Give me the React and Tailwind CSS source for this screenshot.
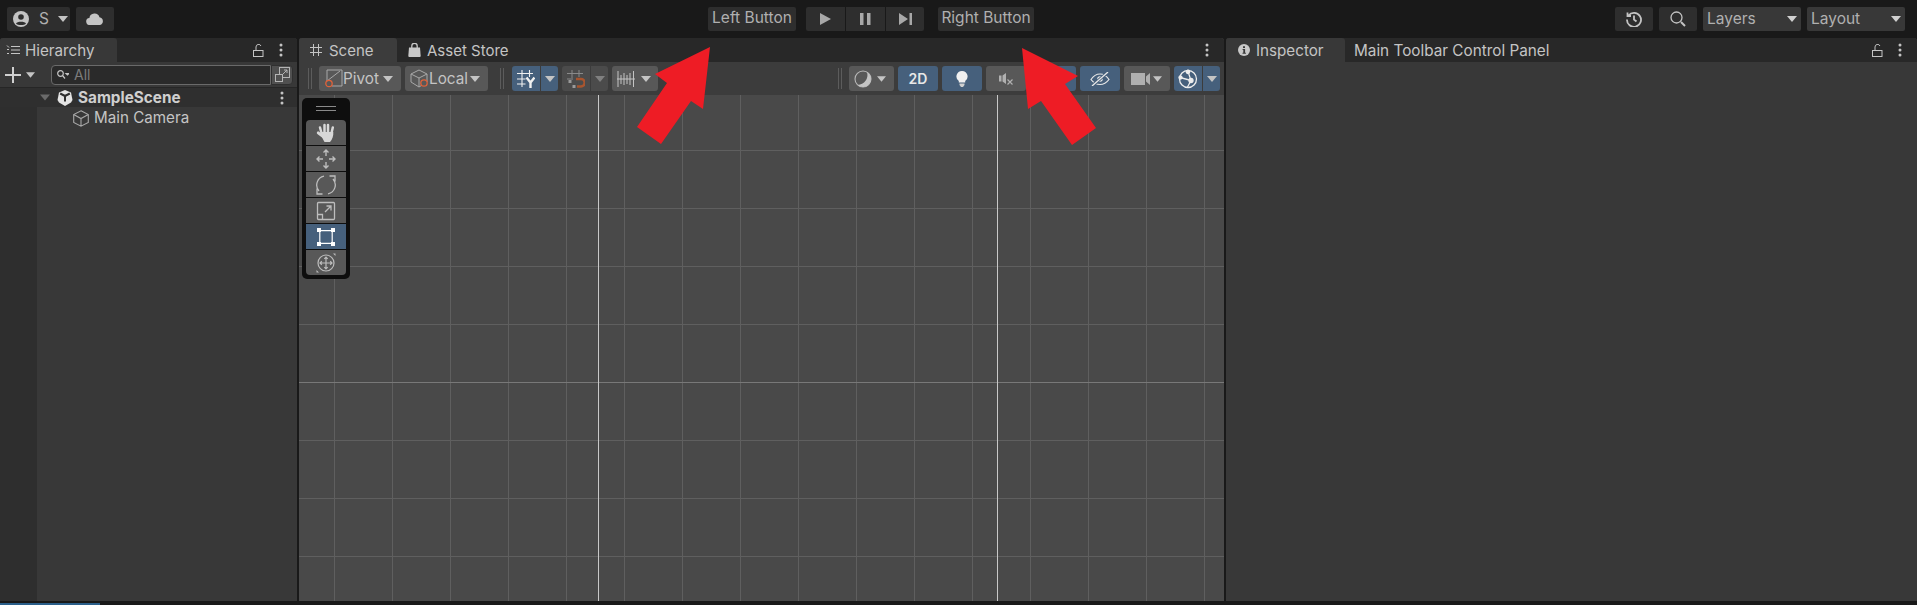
const verticals = [334, 392, 450, 508, 566, 624, 682, 740, 798, 856, 914, 972, 1030, 1088, 1146, 1204];
const horizontals = [150, 208, 266, 324, 440, 498, 556];

function Caret({ className = "w-[10px] h-[6px]", color = "#c4c4c4" }) {
  return (
    <svg viewBox="0 0 10 6" className={className}>
      <path d="M0 0h10L5 6z" fill={color} />
    </svg>
  );
}

function Kebab({ className = "" }) {
  return (
    <svg viewBox="0 0 4 14" className={`w-[4px] h-[14px] ${className}`}>
      <circle cx="2" cy="2" r="1.5" fill="#c4c4c4" />
      <circle cx="2" cy="7" r="1.5" fill="#c4c4c4" />
      <circle cx="2" cy="12" r="1.5" fill="#c4c4c4" />
    </svg>
  );
}

function Lock() {
  return (
    <svg viewBox="0 0 11 13" className="w-[11px] h-[13px]" fill="none" stroke="#c4c4c4" strokeWidth="1">
      <rect x="0.5" y="6.5" width="9.5" height="6" />
      <path d="M3 6.5V3a2.6 2.6 0 0 1 5-1" />
    </svg>
  );
}

function Handle() {
  return (
    <div className="flex gap-[2px] h-[21px]">
      <div className="w-[1px] bg-[#5c5c5c]" />
      <div className="w-[1px] bg-[#5c5c5c]" />
    </div>
  );
}

function TopButton({ className = "", children }) {
  return (
    <div className={`h-[24px] rounded-[2px] bg-[#2e2e2e] flex items-center text-[#b0b0b0] text-[15.5px] ${className}`}>
      {children}
    </div>
  );
}

function ToolButton({ className = "", active, children }) {
  return (
    <div
      className={`h-[25px] rounded-[3px] flex items-center justify-center ${active ? "bg-[#46607c]" : "bg-[#585858]"} ${className}`}
    >
      {children}
    </div>
  );
}

function SplitButton({ active, dim, left, className = "" }) {
  return (
    <div className={`h-[25px] w-[46px] flex rounded-[3px] overflow-hidden ${className}`}>
      <div className={`w-[28px] flex items-center justify-center ${active ? "bg-[#46607c]" : dim ? "bg-[#4b4b4b]" : "bg-[#585858]"}`}>
        {left}
      </div>
      <div className={`flex-1 ml-[1px] flex items-center justify-center ${active ? "bg-[#46607c]" : dim ? "bg-[#4b4b4b]" : "bg-[#585858]"}`}>
        <Caret color={dim ? "#808080" : "#c4c4c4"} />
      </div>
    </div>
  );
}

function PaletteButton({ active, className = "", children }) {
  return (
    <div className={`h-[25px] flex items-center justify-center ${active ? "bg-[#46607c]" : "bg-[#585858]"} ${className}`}>
      {children}
    </div>
  );
}

function SceneGrid() {
  return (
    <svg className="absolute top-0 left-0 w-[925px] h-[506px]" viewBox="299 95 925 506">
      {verticals.map((x) => (
        <rect key={x} x={x} y="95" width="1" height="506" fill="#5f5f5f" />
      ))}
      {horizontals.map((y) => (
        <rect key={y} x="299" y={y} width="925" height="1" fill="#5f5f5f" />
      ))}
      <rect x="299" y="382" width="925" height="1" fill="#787878" />
      <rect x="598" y="95" width="1" height="506" fill="#c8c8c8" />
      <rect x="997" y="95" width="1" height="506" fill="#c8c8c8" />
    </svg>
  );
}

function ToolPalette() {
  return (
    <div className="absolute left-[3px] top-[3px] w-[48px] h-[181px] bg-[#0e0e0e] rounded-[5px] px-[4px]">
      <div className="h-[22px] flex flex-col items-center justify-center gap-[3px] pb-[1px]">
        <div className="w-[20px] h-[1px] bg-[#8a8a8a]" />
        <div className="w-[20px] h-[1px] bg-[#8a8a8a]" />
      </div>
      <div className="flex flex-col gap-[1px]">
        <PaletteButton className="rounded-t-[4px]">
          <svg viewBox="0 0 20 20" className="w-[20px] h-[20px]" fill="none" stroke="#d8d8d8" strokeLinecap="round">
            <path d="M5.500 10 4 4.500M8.500 9V2M12 9V2M15.500 10 16.800 4.500" strokeWidth="2.500" />
            <path d="M7.500 14 2.200 9.800" strokeWidth="2.800" />
            <path d="M4.800 9h12.500c.3 3.500-1 7.500-3.300 10H8.500C7 16.500 5.500 14 4.800 9z" fill="#d8d8d8" stroke="none" />
          </svg>
        </PaletteButton>
        <PaletteButton>
          <svg viewBox="0 0 20 20" className="w-[20px] h-[20px]" fill="none" stroke="#bdbdbd" strokeWidth="1.400">
            <path d="M10 1v6M10 13v6M1 10h6M13 10h6M7.500 3.500 10 1l2.500 2.500M7.500 16.500 10 19l2.500-2.500M3.500 7.500 1 10l2.500 2.500M16.500 7.500 19 10l-2.500 2.500" />
          </svg>
        </PaletteButton>
        <PaletteButton>
          <svg viewBox="0 0 20 20" className="w-[20px] h-[20px]" fill="none" stroke="#bdbdbd" strokeWidth="1.300">
            <path d="M8 1.200A9 9 0 0 0 3 16M1 13.500V19h5.500" />
            <path d="M12 18.800A9 9 0 0 0 17 4M13.500 1H19v5.500" />
          </svg>
        </PaletteButton>
        <PaletteButton>
          <svg viewBox="0 0 20 20" className="w-[20px] h-[20px]" fill="none" stroke="#bdbdbd" strokeWidth="1.300">
            <rect x="1.500" y="1.500" width="17" height="17" rx="1" />
            <path d="M1.500 13.500h5v5M9 11l6-6M10.500 5H15v4.500" />
          </svg>
        </PaletteButton>
        <PaletteButton active>
          <svg viewBox="0 0 20 20" className="w-[20px] h-[20px]" fill="#ffffff">
            <path d="M5 3h10v1.200H5zM5 15.800h10V17H5zM3.200 5h1.200v10H3.200zM15.600 5h1.200v10h-1.200z" />
            <rect x="1" y="1" width="4" height="4" />
            <rect x="15" y="1" width="4" height="4" />
            <rect x="1" y="15" width="4" height="4" />
            <rect x="15" y="15" width="4" height="4" />
          </svg>
        </PaletteButton>
        <PaletteButton className="rounded-b-[4px]">
          <svg viewBox="0 0 20 20" className="w-[20px] h-[20px]" fill="none" stroke="#bdbdbd" strokeWidth="1.200">
            <circle cx="10" cy="10" r="8" />
            <path d="M10 4v12M4 10h12M8.300 5.800 10 4l1.700 1.800M8.300 14.200 10 16l1.700-1.800M5.800 8.300 4 10l1.800 1.700M14.200 8.300 16 10l-1.800 1.700" />
            <path d="M17 .5h2.500V3zM.5 19.500V17L3 19.500z" fill="#bdbdbd" stroke="none" />
          </svg>
        </PaletteButton>
      </div>
    </div>
  );
}

function Arrows() {
  return (
    <svg className="absolute top-0 left-0 w-[1917px] h-[605px] pointer-events-none" viewBox="0 0 1917 605">
      <polygon points="710,47 655,74 667,83 637,127 661,144 691,101 703,109" fill="#ee1c25" />
      <polygon points="1022,48 1078,76 1065,84 1096,128 1072,145 1041,101 1028,109" fill="#ee1c25" />
    </svg>
  );
}

function TopBar() {
  return (
    <div className="h-[38px] shrink-0 bg-[#191919] flex items-start pt-[7px] pl-[7px] pr-[12px]">
      <TopButton className="w-[63px] pl-[6px]">
        <svg viewBox="0 0 16 16" className="w-[16px] h-[16px]">
          <circle cx="8" cy="8" r="8" fill="#c4c4c4" />
          <circle cx="8" cy="6" r="2.800" fill="#2e2e2e" />
          <path d="M3 12.500c1-2.500 9-2.500 10 0-1.500 2-8.500 2-10 0z" fill="#2e2e2e" />
        </svg>
        <span className="ml-[10px]">S</span>
        <Caret className="w-[10px] h-[6px] ml-[9px]" />
      </TopButton>
      <TopButton className="w-[38px] ml-[6px] justify-center">
        <svg viewBox="0 0 18 12" className="w-[18px] h-[12px]">
          <path d="M4 12a3.500 3.500 0 0 1-.6-7A5.200 5.200 0 0 1 13.500 4.200 4 4 0 0 1 14 12z" fill="#c4c4c4" />
        </svg>
      </TopButton>

      <TopButton className="w-[88px] ml-[594px] justify-center pb-[3px]">Left Button</TopButton>
      <div className="flex ml-[10px] h-[24px] gap-[1px]">
        <div className="w-[39px] bg-[#2e2e2e] rounded-l-[2px] flex items-center justify-center">
          <svg viewBox="0 0 11 12" className="w-[11px] h-[12px]">
            <path d="M0 0l11 6-11 6z" fill="#a8a8a8" />
          </svg>
        </div>
        <div className="w-[39px] bg-[#2e2e2e] flex items-center justify-center">
          <svg viewBox="0 0 11 12" className="w-[11px] h-[12px]">
            <path d="M0 0h3.500v12H0zM7 0h3.500v12H7z" fill="#a8a8a8" />
          </svg>
        </div>
        <div className="w-[38px] bg-[#2e2e2e] rounded-r-[2px] flex items-center justify-center">
          <svg viewBox="0 0 13 12" className="w-[13px] h-[12px]">
            <path d="M0 0l9 6-9 6zM10.500 0H13v12h-2.500z" fill="#a8a8a8" />
          </svg>
        </div>
      </div>
      <TopButton className="w-[96px] ml-[14px] justify-center pb-[3px]">Right Button</TopButton>

      <TopButton className="w-[38px] ml-auto justify-center">
        <svg viewBox="0 0 16 16" className="w-[16px] h-[16px]" fill="none" stroke="#c4c4c4" strokeWidth="1.800">
          <path d="M2.500 4.500a7 7 0 1 1-1.500 4M1.500 1.500v3.500H5M8 4.500V8.500l2.500 2" />
        </svg>
      </TopButton>
      <TopButton className="w-[38px] ml-[6px] justify-center">
        <svg viewBox="0 0 16 16" className="w-[16px] h-[16px]" fill="none" stroke="#c4c4c4" strokeWidth="1.300">
          <circle cx="6.500" cy="6.500" r="5.500" />
          <path d="M11 11l4 4" strokeWidth="2" />
        </svg>
      </TopButton>
      <TopButton className="w-[98px] ml-[6px] pl-[4px] pr-[3px] justify-between bg-[#383838]">
        Layers
        <Caret className="w-[10px] h-[6px] mr-[1px]" color="#d0d0d0" />
      </TopButton>
      <TopButton className="w-[98px] ml-[6px] pl-[4px] pr-[3px] justify-between bg-[#383838]">
        Layout
        <Caret className="w-[10px] h-[6px] mr-[1px]" color="#d0d0d0" />
      </TopButton>
    </div>
  );
}

function Hierarchy() {
  return (
    <div className="w-[297px] shrink-0 flex flex-col rounded-t-[3px] overflow-hidden bg-[#383838]">
      <div className="h-[24px] shrink-0 bg-[#282828] flex items-center">
        <div className="w-[117px] h-full bg-[#383838] rounded-tr-[3px] flex items-center pl-[6px]">
          <svg viewBox="0 0 14 10" className="w-[14px] h-[10px]" fill="none" stroke="#c4c4c4" strokeWidth="1">
            <path d="M5 1.500h9M5 5h9M5 8.500h9M1 .5 3 2.500M1 4.500h2M1 8.500h2" />
          </svg>
          <span className="ml-[5px] pt-[2px] text-[15.2px] text-[#c4c4c4]">Hierarchy</span>
        </div>
        <div className="ml-auto flex items-center mr-[14px] gap-[15px]">
          <Lock />
          <Kebab />
        </div>
      </div>
      <div className="h-[25px] shrink-0 flex items-center pl-[5px]">
        <svg viewBox="0 0 16 16" className="w-[16px] h-[16px]">
          <path d="M7 0h2v7h7v2H9v7H7V9H0V7h7z" fill="#d0d0d0" />
        </svg>
        <Caret className="w-[9px] h-[6px] ml-[5px]" />
        <div className="ml-[16px] w-[220px] h-[20px] rounded-l-[4px] border border-[#6a6a6a] bg-[#2a2a2a] flex items-center pl-[5px]">
          <svg viewBox="0 0 12 10" className="w-[12px] h-[10px]" fill="none" stroke="#c4c4c4" strokeWidth="1.200">
            <circle cx="3.500" cy="3.500" r="2.800" />
            <path d="M5.500 5.500 8 8.500M9 3.500h3l-1.500 1.500z" />
          </svg>
          <span className="ml-[5px] text-[14px] text-[#7c7c7c]">All</span>
        </div>
        <div className="w-[22px] h-[20px] rounded-r-[4px] bg-[#505050] border border-[#303030] flex items-center justify-center">
          <svg viewBox="0 0 15 15" className="w-[15px] h-[15px]" fill="none" stroke="#b4b4b4" strokeWidth="1">
            <rect x="4.500" y=".5" width="10" height="10" />
            <rect x=".5" y="7.500" width="7" height="7" fill="#505050" />
            <path d="M7 8l5-5M9 3h3v3" />
          </svg>
        </div>
      </div>
      <div className="h-[20px] shrink-0 bg-[#2f2f2f] border-t border-[#262626] flex items-center pl-[40px] pr-[13px]">
        <Caret className="w-[10px] h-[9px]" color="#6a6a6a" />
        <svg viewBox="0 0 16 16" className="w-[16px] h-[16px] ml-[7px]">
          <path d="M8 0 14 2.500 15.500 10 14 12.500 8 16 2 12.500 .5 10 2 2.500z" fill="#e4e4e4" />
          <path d="M8 6 3.200 3.500M8 6l4.800-2.500M8 6v5.500" stroke="#2f2f2f" strokeWidth="2" />
        </svg>
        <span className="ml-[5px] pt-[2px] text-[15.3px] font-bold text-[#cfcfcf]">SampleScene</span>
        <Kebab className="ml-auto" />
      </div>
      <div className="flex-1 flex">
        <div className="w-[37px] bg-[#2e2e2e]" />
        <div className="flex-1">
          <div className="h-[22px] flex items-center pl-[36px]">
            <svg viewBox="0 0 16 17" className="w-[16px] h-[17px]" fill="none" stroke="#a8a8a8" strokeWidth="1.100">
              <path d="M8 .8 15.300 4.500V12.500L8 16.200.7 12.500V4.500zM.7 4.500 8 8.500l7.300-4M8 8.500v7.700" />
            </svg>
            <span className="ml-[5px] text-[15.2px] text-[#c4c4c4]">Main Camera</span>
          </div>
        </div>
      </div>
    </div>
  );
}

function SceneToolbar() {
  return (
    <div className="h-[33px] shrink-0 bg-[#3c3c3c] flex items-center">
      <Handle />
      <ToolButton className="w-[82px] ml-[7px] pl-[5px] pr-[8px] !justify-start">
        <svg viewBox="0 0 19 19" className="w-[19px] h-[19px] shrink-0" fill="none">
          <path d="M3 12V1h15v16H8M3 12 16 2" stroke="#a8a8a8" strokeWidth="1" />
          <circle cx="5" cy="14.500" r="3.200" stroke="#e0623a" strokeWidth="1.300" />
        </svg>
        <span className="pt-[2px] text-[15.3px] text-[#c4c4c4]">Pivot</span>
        <Caret className="w-[10px] h-[6px] ml-auto" />
      </ToolButton>
      <ToolButton className="w-[83px] ml-[4px] pl-[5px] pr-[8px] !justify-start">
        <svg viewBox="0 0 19 19" className="w-[19px] h-[19px] shrink-0" fill="none">
          <path d="M9 1 17 5v8l-8 5-8-5V5zM1 5l8 4 8-4M9 9v9" stroke="#a8a8a8" strokeWidth="1" />
          <circle cx="14" cy="14" r="3.200" fill="#585858" stroke="#e0623a" strokeWidth="1.300" />
        </svg>
        <span className="pt-[2px] text-[15.3px] text-[#c4c4c4]">Local</span>
        <Caret className="w-[10px] h-[6px] ml-auto" />
      </ToolButton>
      <div className="ml-[12px]">
        <Handle />
      </div>
      <SplitButton
        className="ml-[8px]"
        active
        left={
          <svg viewBox="0 0 18 18" className="w-[18px] h-[18px]" fill="none" stroke="#f0f0f0" strokeWidth="1.100">
            <path d="M5 0v17M12.500 0v7M0 3.500h16M0 9h8.500M0 14h8.500" />
            <path d="M9.500 7.500 13.500 12.500 17.500 7.500M13.500 12.500V18" strokeWidth="2.400" />
          </svg>
        }
      />
      <SplitButton
        className="ml-[4px]"
        dim
        left={
          <svg viewBox="0 0 18 18" className="w-[18px] h-[18px]" fill="none" stroke="#8a8a8a" strokeWidth="1">
            <path d="M5 0v8M12 0v7M0 3.500h16M0 9h6" />
            <rect x="1.500" y="10" width="3" height="3" fill="#9a9a9a" stroke="none" />
            <rect x="5.500" y="15" width="3" height="3" fill="#9a9a9a" stroke="none" />
            <path d="M9 9h5a3.200 3.200 0 0 1 0 7.500h-4" stroke="#a8552f" strokeWidth="2.600" />
          </svg>
        }
      />
      <div className="ml-[4px] h-[25px] w-[46px] rounded-[3px] bg-[#585858] flex items-center pl-[5px]">
        <svg viewBox="0 0 18 16" className="w-[18px] h-[16px]" fill="none" stroke="#c4c4c4" strokeWidth="1">
          <path d="M1 0v16M4 4v9M7 2v12M10 4v9M13 2v12M16.500 0v16M0 8h18" />
        </svg>
        <Caret className="w-[10px] h-[6px] ml-[6px]" />
      </div>
      <div className="ml-auto mr-[7px]">
        <Handle />
      </div>
      <ToolButton className="w-[45px] pl-[5px] !justify-start">
        <svg viewBox="0 0 18 18" className="w-[18px] h-[18px]" fill="none">
          <circle cx="9" cy="9" r="8" stroke="#b8b8b8" strokeWidth="1.100" />
          <path d="M13 2.070A8 8 0 1 1 3.700 15 10 10 0 0 0 13 2.070z" fill="#c4c4c4" />
        </svg>
        <Caret className="w-[9px] h-[6px] ml-[5px]" />
      </ToolButton>
      <ToolButton className="w-[40px] ml-[4px]" active>
        <span className="text-[14px] font-semibold text-[#e8e8e8]">2D</span>
      </ToolButton>
      <ToolButton className="w-[40px] ml-[4px]" active>
        <svg viewBox="0 0 12 16" className="w-[12px] h-[16px]">
          <path d="M6 0a5.500 5.500 0 0 1 3.200 10V11.500H2.800V10A5.500 5.500 0 0 1 6 0z" fill="#f0f0f0" />
          <path d="M3.500 12.500h5V14L7 16H5L3.500 14z" fill="#d0d0d0" />
        </svg>
      </ToolButton>
      <ToolButton className="w-[40px] ml-[4px]">
        <svg viewBox="0 0 15 13" className="w-[15px] h-[13px]">
          <path d="M0 3.500h2.500v6H0zM3.500 3.500 7 1v11L3.500 9.500z" fill="#b0b0b0" />
          <path d="M8.500 7.500l5 5M13.500 7.500l-5 5" stroke="#b0b0b0" strokeWidth="1.200" />
        </svg>
      </ToolButton>
      <ToolButton className="w-[46px] ml-[4px]" active />
      <ToolButton className="w-[40px] ml-[4px]" active>
        <svg viewBox="0 0 20 14" className="w-[20px] h-[14px]" fill="none" stroke="#e8e8e8" strokeWidth="1.200">
          <path d="M1 7.500C4 3 7 2 10 2s6 1 9 5.500c-3 4-6 5-9 5s-6-1-9-5z" />
          <circle cx="10" cy="7" r="2.800" fill="#e8e8e8" stroke="none" />
          <path d="M2 14 18 0" stroke="#46607c" strokeWidth="3" />
          <path d="M2 14 18 0" strokeWidth="1.300" />
        </svg>
      </ToolButton>
      <ToolButton className="w-[46px] ml-[4px] pl-[7px] !justify-start">
        <svg viewBox="0 0 19 12" className="w-[19px] h-[12px]">
          <rect x="0" y="0" width="14" height="12" fill="#b0b0b0" />
          <path d="M15 3.500 19 0v12l-4-3.500z" fill="#b0b0b0" />
        </svg>
        <Caret className="w-[9px] h-[6px] ml-[3px]" />
      </ToolButton>
      <SplitButton
        className="ml-[4px] mr-[4px]"
        active
        left={
          <svg viewBox="0 0 20 20" className="w-[20px] h-[20px]" fill="none" stroke="#ececec" strokeWidth="1.300">
            <circle cx="10" cy="10" r="8.500" />
            <path d="M2 8.500 13 11.500 10 2.500M13 11.500 9.500 18" />
            <circle cx="10" cy="2.800" r="1.700" fill="#ececec" />
            <circle cx="13" cy="11.500" r="2" fill="#ececec" />
            <circle cx="2.500" cy="8.500" r="1.500" fill="#ececec" />
          </svg>
        }
      />
    </div>
  );
}

function Scene() {
  return (
    <div className="w-[925px] shrink-0 flex flex-col rounded-t-[3px] overflow-hidden bg-[#494949]">
      <div className="h-[24px] shrink-0 bg-[#282828] flex items-center">
        <div className="w-[98px] h-full bg-[#3c3c3c] rounded-tr-[3px] flex items-center pl-[11px]">
          <svg viewBox="0 0 12 12" className="w-[12px] h-[12px]" fill="none" stroke="#c4c4c4" strokeWidth="1">
            <path d="M3.500 0v12M8.500 0v12M0 3.500h12M0 8.500h12" />
          </svg>
          <span className="ml-[7px] pt-[2px] text-[15px] text-[#c4c4c4]">Scene</span>
        </div>
        <div className="flex items-center ml-[11px]">
          <svg viewBox="0 0 13 14" className="w-[13px] h-[14px]">
            <path d="M1 4.500h11l.7 8.500a1 1 0 0 1-1 1H1.300a1 1 0 0 1-1-1z" fill="#c8c8c8" />
            <path d="M3.800 5V3a2.700 2.700 0 0 1 5.400 0v2" fill="none" stroke="#c8c8c8" strokeWidth="1.300" />
          </svg>
          <span className="ml-[6px] pt-[2px] text-[15px] text-[#c4c4c4]">Asset Store</span>
        </div>
        <Kebab className="ml-auto mr-[15px]" />
      </div>
      <div className="pl-[9px] bg-[#3c3c3c]">
        <SceneToolbar />
      </div>
      <div className="relative flex-1 overflow-hidden">
        <SceneGrid />
        <ToolPalette />
      </div>
    </div>
  );
}

function Inspector() {
  return (
    <div className="flex-1 flex flex-col rounded-t-[3px] overflow-hidden bg-[#383838]">
      <div className="h-[24px] shrink-0 bg-[#282828] flex items-center">
        <div className="w-[119px] h-full bg-[#383838] rounded-tr-[3px] flex items-center pl-[12px]">
          <svg viewBox="0 0 12 12" className="w-[12px] h-[12px]">
            <circle cx="6" cy="6" r="6" fill="#c8c8c8" />
            <path d="M5 2.300h2v1.800H5zM4.600 5h2.500v3.800h.8v1H4.500v-1h.8V6h-.7z" fill="#383838" />
          </svg>
          <span className="ml-[6px] pt-[2px] text-[15.2px] text-[#c4c4c4]">Inspector</span>
        </div>
        <span className="ml-[9px] pt-[2px] text-[15.3px] text-[#c4c4c4]">Main Toolbar Control Panel</span>
        <div className="ml-auto flex items-center mr-[15px] gap-[15px]">
          <Lock />
          <Kebab />
        </div>
      </div>
    </div>
  );
}

export default function App() {
  return (
    <div className="relative w-full h-[605px] overflow-hidden bg-[#191919] flex flex-col font-[Inter,sans-serif]">
      <TopBar />
      <div className="flex h-[563px] gap-[2px]">
        <Hierarchy />
        <Scene />
        <Inspector />
      </div>
      <div className="flex-1 flex items-end">
        <div className="w-[100px] h-[2px] bg-[#2b5f8a]" />
      </div>
      <Arrows />
    </div>
  );
}
